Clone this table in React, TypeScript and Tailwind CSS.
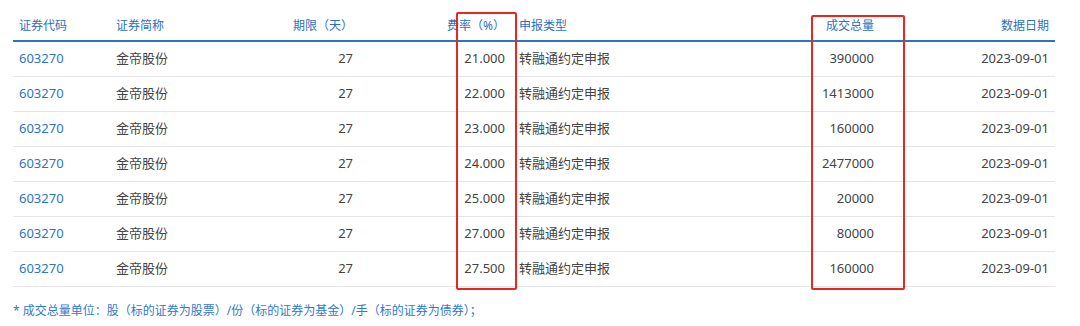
const rows = [
  { rate: "21.000", volume: "390000" },
  { rate: "22.000", volume: "1413000" },
  { rate: "23.000", volume: "160000" },
  { rate: "24.000", volume: "2477000" },
  { rate: "25.000", volume: "20000" },
  { rate: "27.000", volume: "80000" },
  { rate: "27.500", volume: "160000" },
];

const font = { fontFamily: "'Noto Sans', 'Noto Sans CJK SC', sans-serif" };

export default function App() {
  return (
    <div className="relative h-[326px] w-[1080px] bg-white" style={font}>
      <div className="px-[13px] pt-[9px]">
        <table className="w-[1042px] table-fixed border-collapse">
          <colgroup>
            <col className="w-[97px]" />
            <col className="w-[125px]" />
            <col className="w-[124px]" />
            <col className="w-[152px]" />
            <col className="w-[249px]" />
            <col className="w-[120px]" />
            <col className="w-[175px]" />
          </colgroup>
          <thead>
            <tr className="h-[32px] border-b-2 border-[#2a74d0] text-[12px] text-[#2f6fc0]">
              <th className="px-[6px] pt-[2px] text-left font-normal">证券代码</th>
              <th className="px-[6px] pt-[2px] text-left font-normal">证券简称</th>
              <th className="px-[6px] pt-[2px] text-right font-normal">期限（天）</th>
              <th className="px-[6px] pt-[2px] text-right font-normal">费率（%）</th>
              <th className="pl-[8px] pt-[2px] text-left font-normal">申报类型</th>
              <th className="px-[6px] pt-[2px] text-right font-normal">成交总量</th>
              <th className="px-[6px] pt-[2px] text-right font-normal">数据日期</th>
            </tr>
          </thead>
          <tbody>
            {rows.map((r, i) => (
              <tr key={i} className="h-[35px] border-b border-[#e6e6ea] text-[13px] text-[#444]">
                <td className="px-[6px] text-[#2d74c9]">603270</td>
                <td className="px-[6px]">金帝股份</td>
                <td className="px-[6px] text-right">27</td>
                <td className="px-[6px] text-right">{r.rate}</td>
                <td className="pl-[8px]">转融通约定申报</td>
                <td className="px-[6px] text-right">{r.volume}</td>
                <td className="px-[6px] text-right">2023-09-01</td>
              </tr>
            ))}
          </tbody>
        </table>
        <p className="mt-[16px] text-[12px] leading-[16px] text-[#2f78d2]">
          * 成交总量单位：股（标的证券为股票）/份（标的证券为基金）/手（标的证券为债券）；
        </p>
      </div>
      <div className="pointer-events-none absolute left-[456px] top-[12px] h-[278px] w-[61px] rounded-[2px] border-2 border-[#e8281f]" />
      <div className="pointer-events-none absolute left-[811px] top-[15px] h-[275px] w-[94px] rounded-[2px] border-2 border-[#e8281f]" />
    </div>
  );
}
